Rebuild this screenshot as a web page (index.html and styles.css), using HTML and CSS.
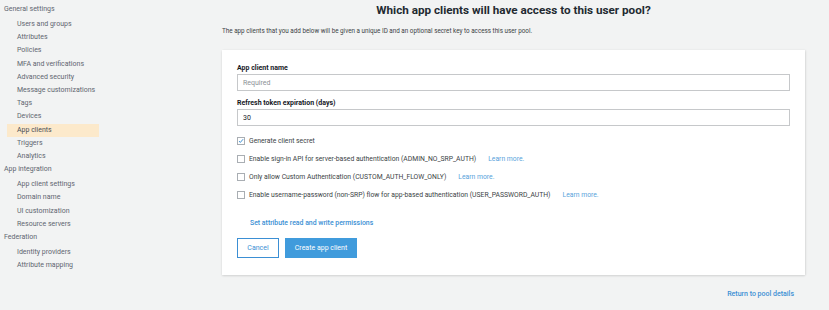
FILE: index.html
```html
<!DOCTYPE html>
<html lang="en">
<head>
    <meta charset="UTF-8">
    <title>App clients</title>
    <link rel="stylesheet" href="styles.css">
</head>
<body>

<div class="page">
    <!-- Side navigation -->
    <nav class="sidebar">
        <div class="nav-head">General settings</div>
        <a class="nav-item" href="#">Users and groups</a>
        <a class="nav-item" href="#">Attributes</a>
        <a class="nav-item" href="#">Policies</a>
        <a class="nav-item" href="#">MFA and verifications</a>
        <a class="nav-item" href="#">Advanced security</a>
        <a class="nav-item" href="#">Message customizations</a>
        <a class="nav-item" href="#">Tags</a>
        <a class="nav-item" href="#">Devices</a>
        <a class="nav-item active" href="#">App clients</a>
        <a class="nav-item" href="#">Triggers</a>
        <a class="nav-item" href="#">Analytics</a>
        <div class="nav-head">App integration</div>
        <a class="nav-item" href="#">App client settings</a>
        <a class="nav-item" href="#">Domain name</a>
        <a class="nav-item" href="#">UI customization</a>
        <a class="nav-item" href="#">Resource servers</a>
        <div class="nav-head">Federation</div>
        <a class="nav-item" href="#">Identity providers</a>
        <a class="nav-item" href="#">Attribute mapping</a>
    </nav>

    <!-- Main content -->
    <main class="content">
        <h1>Which app clients will have access to this user pool?</h1>
        <p class="intro">The app clients that you add below will be given a unique ID and an optional secret key to access this user pool.</p>

        <div class="card">
            <label class="field-label">App client name</label>
            <input class="field" type="text" placeholder="Required">

            <label class="field-label">Refresh token expiration (days)</label>
            <input class="field" type="text" value="30">

            <div class="checks">
                <label class="check">
                    <span class="box checked">
                        <svg viewBox="0 0 8 8" width="8" height="8"><path d="M1.4 4.1 L3.1 5.9 L6.8 1.6" fill="none" stroke="#3b8fd4" stroke-width="1.3"/></svg>
                    </span>
                    Generate client secret
                </label>
                <label class="check">
                    <span class="box"></span>
                    Enable sign-in API for server-based authentication (ADMIN_NO_SRP_AUTH)
                    <a class="learn" href="#">Learn more.</a>
                </label>
                <label class="check">
                    <span class="box"></span>
                    Only allow Custom Authentication (CUSTOM_AUTH_FLOW_ONLY)
                    <a class="learn" href="#">Learn more.</a>
                </label>
                <label class="check">
                    <span class="box"></span>
                    Enable username-password (non-SRP) flow for app-based authentication (USER_PASSWORD_AUTH)
                    <a class="learn" href="#">Learn more.</a>
                </label>
            </div>

            <a class="perm-link" href="#">Set attribute read and write permissions</a>

            <div class="actions">
                <button class="btn btn-cancel">Cancel</button>
                <button class="btn btn-primary">Create app client</button>
            </div>
        </div>

        <div class="footer-link">
            <a href="#">Return to pool details</a>
        </div>
    </main>
</div>

</body>
</html>
```

FILE: styles.css
```css
* {
    margin: 0;
    padding: 0;
    box-sizing: border-box;
}

body {
    font-family: Roboto, "Liberation Sans", sans-serif;
    font-size: 7px;
    background: #f2f3f3;
    color: #5f6670;
    width: 829px;
    height: 310px;
    overflow: hidden;
}

a {
    text-decoration: none;
}

.page {
    display: flex;
}

/* Sidebar */
.sidebar {
    width: 222px;
    flex-shrink: 0;
    display: flex;
    flex-direction: column;
    align-items: flex-start;
    padding-top: 3px;
}

.nav-head {
    padding-left: 4px;
    line-height: 13px;
    margin-bottom: 2px;
    color: #5f6670;
}

.nav-item {
    display: block;
    width: 92px;
    margin-left: 7px;
    padding-left: 10px;
    line-height: 13.2px;
    color: #5f6670;
}

.nav-item.active {
    background: #fce9cb;
    color: #4a4f56;
}

/* Main */
.content {
    width: 583px;
}

.content h1 {
    font-size: 11.7px;
    font-weight: bold;
    color: #232a31;
    text-align: center;
    line-height: 21px;
    margin-bottom: 5px;
}

.intro {
    font-size: 6.3px;
    color: #3b3f45;
    line-height: 10px;
    margin-bottom: 14px;
}

.card {
    background: #fff;
    box-shadow: 0 1px 2px rgba(0, 0, 0, 0.12), 1px 0 2px rgba(0, 0, 0, 0.06);
    padding: 13px 15px 17px 15px;
    display: flex;
    flex-direction: column;
    align-items: flex-start;
}

.field-label {
    font-weight: bold;
    color: #16191f;
    line-height: 10px;
    margin-bottom: 1px;
}

.field {
    width: 553px;
    height: 17px;
    border: 1px solid #c6c8ca;
    font-family: inherit;
    font-size: 7px;
    color: #16191f;
    padding: 0 5px;
    outline: none;
    margin-bottom: 7px;
}

.field::placeholder {
    color: #8d9196;
}

.checks {
    display: flex;
    flex-direction: column;
    gap: 8px;
    margin-top: 3px;
}

.check {
    display: flex;
    align-items: center;
    font-size: 6.8px;
    line-height: 10px;
    color: #3b3f45;
}

.box {
    width: 8px;
    height: 8px;
    border: 1px solid #a9aeb3;
    margin-right: 4px;
    flex-shrink: 0;
    display: flex;
    align-items: center;
    justify-content: center;
    background: #fff;
}

.box svg {
    display: block;
}

.learn {
    color: #58a3db;
    margin-left: 12px;
}

.perm-link {
    color: #3b8fd4;
    font-weight: 500;
    font-size: 6.9px;
    margin: 18px 0 0 13px;
    line-height: 10px;
}

.actions {
    display: flex;
    gap: 6px;
    margin-top: 10px;
}

.btn {
    height: 20px;
    font-family: inherit;
    font-size: 7px;
    cursor: pointer;
}

.btn-cancel {
    width: 42px;
    background: #fff;
    border: 1px solid #3b8fd4;
    color: #3b8fd4;
}

.btn-primary {
    width: 72px;
    background: #409bdc;
    border: none;
    color: #fff;
}

.footer-link {
    display: flex;
    justify-content: flex-end;
    padding: 14px 11px 0 0;
    line-height: 10px;
}

.footer-link a {
    color: #3b8fd4;
    font-weight: 500;
}
```
